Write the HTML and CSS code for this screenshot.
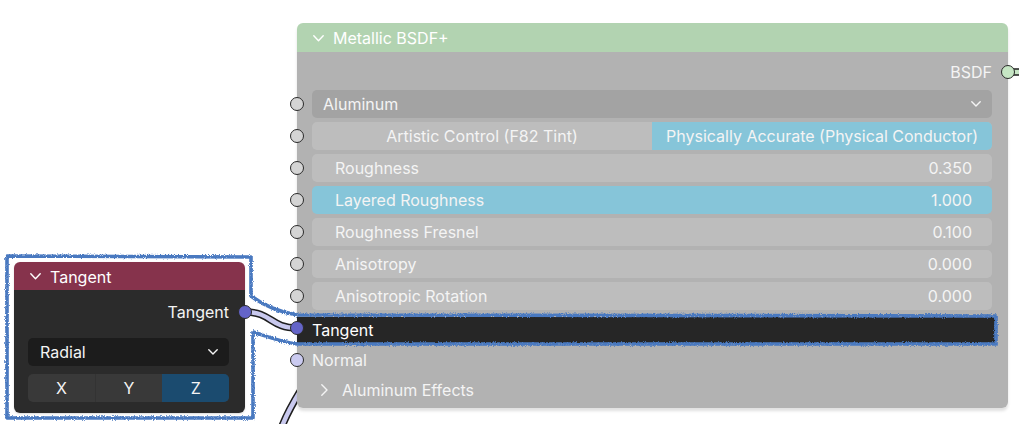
FILE: index.html
```html
<!DOCTYPE html>
<html>
<head>
<meta charset="utf-8">
<link rel="stylesheet" href="styles.css">
</head>
<body>
<div class="canvas">
  <svg class="links" width="1019" height="424" viewBox="0 0 1019 424">
    <path class="link-outer" d="M308 378 C 299 394, 287 410, 280 432"/>
    <path class="link-inner lav" d="M308 378 C 299 394, 287 410, 280 432"/>
    <path class="link-outer" d="M1008 72 L1025 72"/>
    <path class="link-inner green" d="M1008 72 L1025 72"/>
    <path class="link-outer" d="M245 312 C 272 312, 270 328, 297 328"/>
    <path class="link-inner lav" d="M245 312 C 272 312, 270 328, 297 328"/>
  </svg>

  <div class="node metallic">
    <div class="node-header">
      <svg class="hchev" width="11" height="7" viewBox="0 0 11 7"><polyline points="0.8,0.8 5.5,5.8 10.2,0.8"/></svg>
      <span>Metallic BSDF+</span>
    </div>
    <div class="node-body">
      <div class="row out"><span class="out-label">BSDF</span><i class="socket sock-out green"></i></div>
      <div class="row"><i class="socket sock-in gray"></i>
        <div class="field menu"><span>Aluminum</span><svg class="dchev" width="10" height="6" viewBox="0 0 10 6"><polyline points="0.8,0.8 5,5 9.2,0.8"/></svg></div>
      </div>
      <div class="row"><i class="socket sock-in gray"></i>
        <div class="field seg"><span class="seg-item">Artistic Control (F82 Tint)</span><span class="seg-item on">Physically Accurate (Physical Conductor)</span></div>
      </div>
      <div class="row"><i class="socket sock-in gray"></i>
        <div class="field num"><span>Roughness</span><span>0.350</span></div>
      </div>
      <div class="row"><i class="socket sock-in gray"></i>
        <div class="field num on"><span>Layered Roughness</span><span>1.000</span></div>
      </div>
      <div class="row"><i class="socket sock-in gray"></i>
        <div class="field num"><span>Roughness Fresnel</span><span>0.100</span></div>
      </div>
      <div class="row"><i class="socket sock-in gray"></i>
        <div class="field num"><span>Anisotropy</span><span>0.000</span></div>
      </div>
      <div class="row"><i class="socket sock-in gray"></i>
        <div class="field num"><span>Anisotropic Rotation</span><span>0.000</span></div>
      </div>
      <div class="row"><i class="socket sock-in violet"></i>
        <div class="band"><span>Tangent</span></div>
      </div>
      <div class="row plain"><i class="socket sock-in lav"></i><span>Normal</span></div>
      <div class="row panel">
        <svg class="rchev" width="7" height="12" viewBox="0 0 7 12"><polyline points="0.8,0.8 6,6 0.8,11.2"/></svg>
        <span>Aluminum Effects</span>
      </div>
    </div>
  </div>

  <div class="node tangent-node">
    <div class="node-header">
      <svg class="hchev" width="11" height="7" viewBox="0 0 11 7"><polyline points="0.8,0.8 5.5,5.8 10.2,0.8"/></svg>
      <span>Tangent</span>
    </div>
    <div class="node-body">
      <div class="row out"><span class="out-label">Tangent</span><i class="socket sock-out violet"></i></div>
      <div class="dark-menu"><span>Radial</span><svg class="dchev" width="10" height="6" viewBox="0 0 10 6"><polyline points="0.8,0.8 5,5 9.2,0.8"/></svg></div>
      <div class="axis">
        <span class="axis-item">X</span>
        <span class="axis-item">Y</span>
        <span class="axis-item on">Z</span>
      </div>
    </div>
  </div>

  <svg class="outline" width="1019" height="424" viewBox="0 0 1019 424">
    <defs>
      <filter id="rough" x="-5%" y="-5%" width="110%" height="110%">
        <feTurbulence type="fractalNoise" baseFrequency="1.1" numOctaves="2" seed="4" result="n"/>
        <feDisplacementMap in="SourceGraphic" in2="n" scale="3.4" xChannelSelector="R" yChannelSelector="G"/>
      </filter>
    </defs>
    <path filter="url(#rough)" d="M7 256 L251 257 L251 296 C 263 305, 279 312, 297 315 L996 316 L996 344 L297 344 C 281 342, 266 336, 253 332 L253 418 L7 418 Z"/>
  </svg>
</div>
</body>
</html>
```

FILE: styles.css
```css
* { box-sizing: border-box; }

html, body {
  margin: 0;
  padding: 0;
  background: #ffffff;
}

.canvas {
  position: relative;
  width: 1019px;
  height: 424px;
  overflow: hidden;
  background: #ffffff;
  font-family: Inter, "Noto Sans", "DejaVu Sans", sans-serif;
  font-size: 16px;
  color: #f4f4f4;
}

.links, .outline {
  position: absolute;
  left: 0;
  top: 0;
  pointer-events: none;
}
.links { z-index: 0; }
.outline { z-index: 5; }

.link-outer {
  fill: none;
  stroke: #1e1e1e;
  stroke-width: 7.5;
  stroke-linecap: round;
}
.link-inner {
  fill: none;
  stroke-width: 4.5;
  stroke-linecap: round;
}
.link-inner.lav { stroke: #c9c9ee; }
.link-inner.green { stroke: #c8e6c6; }

.outline path {
  fill: none;
  stroke: #4a79c0;
  stroke-width: 3.6;
  stroke-linejoin: round;
}

/* Nodes */
.node {
  position: absolute;
  border-radius: 6px;
  display: flex;
  flex-direction: column;
}

.node-header {
  display: flex;
  align-items: center;
  gap: 9px;
  padding-left: 16px;
  border-radius: 6px 6px 0 0;
  color: #ffffff;
  line-height: 1;
}
.hchev polyline {
  fill: none;
  stroke: #ffffff;
  stroke-width: 1.4;
  stroke-linecap: round;
  stroke-linejoin: round;
}
.node-body {
  display: flex;
  flex-direction: column;
  flex: 1;
  border-radius: 0 0 6px 6px;
}

/* Metallic BSDF node */
.metallic {
  left: 297px;
  top: 23px;
  width: 711px;
  height: 385px;
  z-index: 1;
  box-shadow: 0 3px 3px rgba(0, 0, 0, 0.12);
}
.metallic .node-header {
  height: 29px;
  background: #b2d3b1;
  padding-top: 1px;
}
.metallic .node-body {
  background: #b2b2b2;
  padding: 6px 0 6px 0;
  gap: 4px;
}

.row {
  position: relative;
  height: 28px;
  display: flex;
  align-items: center;
  flex-shrink: 0;
}
.row.out {
  justify-content: flex-end;
}
.metallic .row.out { padding-right: 16px; }
.out-label { line-height: 28px; }

.socket {
  position: absolute;
  top: 50%;
  width: 14px;
  height: 14px;
  margin-top: -7px;
  border-radius: 50%;
  border: 1px solid #2a2a2a;
  z-index: 3;
}
.sock-in { left: -7px; }
.sock-out { right: -7px; }
.socket.gray { background: #d4d4d4; }
.socket.green { background: #c6e6c4; }
.socket.violet { background: #6464c8; }
.socket.lav { background: #cacaf0; }

.field {
  flex: 1;
  height: 28px;
  margin: 0 16px 0 15px;
  border-radius: 5px;
  display: flex;
  align-items: center;
  background: #bdbdbd;
}
.field.menu {
  background: #a3a3a3;
  padding: 0 11px;
  justify-content: space-between;
}
.dchev polyline {
  fill: none;
  stroke: #f4f4f4;
  stroke-width: 1.4;
  stroke-linecap: round;
  stroke-linejoin: round;
}
.field.seg {
  overflow: hidden;
  background: #bdbdbd;
}
.seg-item {
  flex: 1;
  height: 100%;
  display: flex;
  align-items: center;
  justify-content: center;
}
.seg-item.on { background: #86c5d9; }

.field.num {
  justify-content: space-between;
  padding: 0 20px 0 23px;
}
.field.num.on { background: #86c5d9; }

.band {
  flex: 1;
  height: 26px;
  margin: 3px 13px 0 0;
  padding-left: 15px;
  background: #262626;
  display: flex;
  align-items: center;
  color: #ffffff;
}

.row.plain { padding-left: 15px; }
.row.panel {
  height: 24px;
  padding-left: 24px;
  gap: 14px;
}
.rchev polyline {
  fill: none;
  stroke: #f4f4f4;
  stroke-width: 1.4;
  stroke-linecap: round;
  stroke-linejoin: round;
}

/* Tangent node */
.tangent-node {
  left: 14px;
  top: 262px;
  width: 231px;
  height: 151px;
  z-index: 3;
  box-shadow: 0 1px 2px rgba(0, 0, 0, 0.15);
}
.tangent-node .node-header {
  height: 28px;
  background: #86334c;
  padding-top: 1px;
}
.tangent-node .node-body {
  background: #2b2b2b;
  padding: 8px 16px 11px 14px;
}
.tangent-node .row.out { margin-bottom: 12px; }
.tangent-node .sock-out { right: -23px; }

.dark-menu {
  height: 28px;
  border-radius: 5px;
  background: #1c1c1c;
  display: flex;
  align-items: center;
  justify-content: space-between;
  padding: 0 11px 0 12px;
  margin-bottom: 8px;
}
.axis {
  height: 28px;
  display: flex;
  border-radius: 5px;
  overflow: hidden;
  background: #393939;
}
.axis-item {
  flex: 1;
  display: flex;
  align-items: center;
  justify-content: center;
}
.axis-item + .axis-item { border-left: 1px solid #333333; }
.axis-item.on { background: #1b4b6f; border-left: none; }
```
